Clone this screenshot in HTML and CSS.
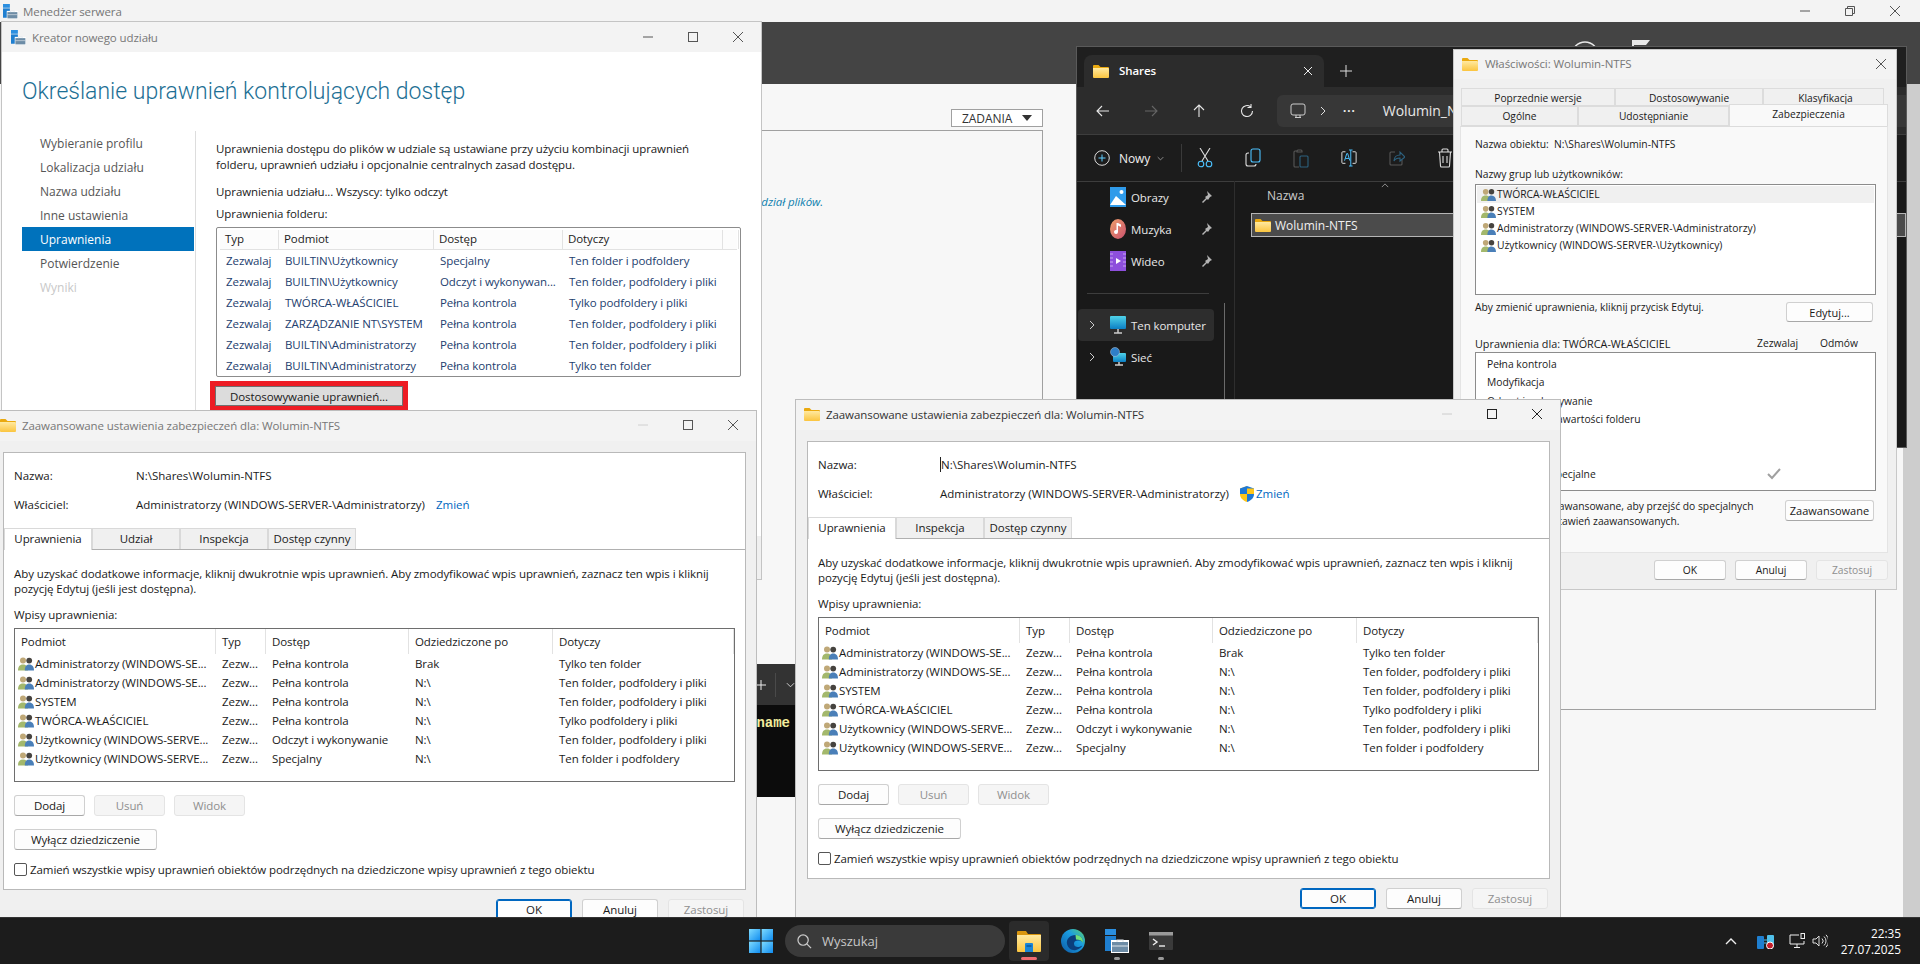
FILE: index.html
```html
<!DOCTYPE html>
<html lang="pl">
<head>
  <meta charset="UTF-8">
  <meta name="viewport" content="width=device-width, initial-scale=1.0">
  <title>Menedżer serwera</title>
  <link rel="stylesheet" href="styles.css">
</head>
<body>

<svg class="defs" width="0" height="0">
  <defs>
    <linearGradient id="folder-body" x1="0" y1="0" x2="0" y2="1">
      <stop offset="0" stop-color="#ffe9a0"/>
      <stop offset="1" stop-color="#fbc53f"/>
    </linearGradient>
    <linearGradient id="win-logo" x1="0" y1="0" x2="1" y2="1">
      <stop offset="0" stop-color="#7fdcff"/>
      <stop offset="1" stop-color="#0f8cf0"/>
    </linearGradient>
    <linearGradient id="edge-grad" x1="0" y1="1" x2="1" y2="0">
      <stop offset="0" stop-color="#0c59a4"/>
      <stop offset="0.6" stop-color="#1b9de2"/>
      <stop offset="1" stop-color="#5ed36a"/>
    </linearGradient>
    <linearGradient id="pc-screen" x1="0" y1="0" x2="0" y2="1">
      <stop offset="0" stop-color="#4fd2e8"/>
      <stop offset="1" stop-color="#0b7fc4"/>
    </linearGradient>
    <linearGradient id="music-grad" x1="0" y1="0" x2="1" y2="1">
      <stop offset="0" stop-color="#f0a06a"/>
      <stop offset="1" stop-color="#c9506e"/>
    </linearGradient>
    <symbol id="i-folder" viewBox="0 0 16 14">
      <path d="M0 2a1 1 0 0 1 1-1h4.500l2 2H15a1 1 0 0 1 1 1v1H0z" fill="#eaa90f"/>
      <path d="M0 4h15a1 1 0 0 1 1 1v8a1 1 0 0 1-1 1H1a1 1 0 0 1-1-1z" fill="url(#folder-body)"/>
    </symbol>
    <symbol id="i-group" viewBox="0 0 16 14">
      <circle cx="5" cy="3.600" r="3" fill="#bfa877"/>
      <path d="M0 13.500c0-3.800 1.500-6 5-6s5 2.200 5 6z" fill="#a3b86c"/>
      <circle cx="11.200" cy="3.600" r="2.900" fill="#46433f"/>
      <path d="M6.800 13.500c0-3.800 1.300-6 4.400-6s4.800 2.200 4.800 6z" fill="#4a7fb8"/>
    </symbol>
    <symbol id="i-server" viewBox="0 0 24 24">
      <rect x="0" y="0" width="11" height="6" fill="#2b8fe0"/>
      <rect x="0" y="7" width="11" height="15" fill="#1f7fd0"/>
      <rect x="6" y="11" width="18" height="13" fill="#fff"/>
      <rect x="7" y="13" width="16" height="10" fill="#6d8ca6"/>
      <path d="M12 13v-2h6v2" fill="none" stroke="#dfe6ec" stroke-width="1.200"/>
      <path d="M7 17h16" stroke="#dfe6ec"/>
    </symbol>
    <symbol id="i-group-tray" viewBox="0 0 18 16">
      <rect x="0" y="3" width="7" height="13" rx="1" fill="#1f7fd0"/>
      <rect x="10" y="2" width="7" height="12" rx="1" fill="#4fc0ea"/>
      <path d="M7 7h3M7 10h3" stroke="#4fc0ea"/>
    </symbol>
  </defs>
</svg>

<div class="desktop">

  <!-- window at the back -->
  <div class="server-manager">
    <div class="sm-title">
      <svg class="ico-16"><use href="#i-server"/></svg>
      <span>Menedżer serwera</span>
      <div class="sm-controls">
        <svg class="ctl" viewBox="0 0 10 10"><path d="M0 5h10"/></svg>
        <svg class="ctl" viewBox="0 0 10 10"><path d="M0.500 2.500h7v7h-7zM2.500 2.500v-2h7v7h-2"/></svg>
        <svg class="ctl" viewBox="0 0 10 10"><path d="M0 0l10 10M10 0L0 10"/></svg>
      </div>
    </div>
    <div class="sm-bar">
      <svg width="80" height="30" viewBox="0 0 80 30">
        <circle cx="13" cy="15" r="13" fill="none" stroke="#e8e8e8" stroke-width="1.500"/>
        <rect x="36" y="10" width="2" height="6" fill="#e8e8e8"/>
        <path d="M60 0h2v20h-2zM62 0h16l-4 5h-12z" fill="#e8e8e8"/>
      </svg>
    </div>
    <div class="sm-body">
      <div class="sm-main">
        <div class="sm-col">
          <div class="sm-tasks">ZADANIA <span class="caret"></span></div>
          <div class="sm-panel">
            <p class="sm-hint">Aby utworzyć udział, uruchom Kreatora nowego udział plików.</p>
          </div>
        </div>
        <div class="sm-col sm-col-right">
          <div class="sm-panel"></div>
        </div>
      </div>
      <div class="sm-scroll"></div>
    </div>
  </div>

  <!-- terminal, only its right edge shows between the dialogs -->
  <div class="terminal">
    <div class="term-bar">
      <svg class="term-plus" viewBox="0 0 10 10"><path d="M5 0v10M0 5h10"/></svg>
      <span class="term-sep"></span>
      <svg class="term-chev" viewBox="0 0 10 6"><path d="M1 1l4 4 4-4"/></svg>
    </div>
    <div class="term-body">name</div>
  </div>

  <!-- file explorer -->
  <div class="explorer">
    <div class="ex-tabs">
      <div class="ex-tab">
        <svg class="ico-folder"><use href="#i-folder"/></svg>
        <span class="ex-tab-name">Shares</span>
        <svg class="ex-x" viewBox="0 0 10 10"><path d="M1 1l8 8M9 1l-8 8"/></svg>
      </div>
      <svg class="ex-plus" viewBox="0 0 12 12"><path d="M6 0v12M0 6h12"/></svg>
    </div>
    <div class="ex-nav">
      <svg class="ex-navbtn" viewBox="0 0 16 16"><path d="M14 8H2M7 3L2 8l5 5"/></svg>
      <svg class="ex-navbtn off" viewBox="0 0 16 16"><path d="M2 8h12M9 3l5 5-5 5"/></svg>
      <svg class="ex-navbtn" viewBox="0 0 16 16"><path d="M8 14V2M3 7l5-5 5 5"/></svg>
      <svg class="ex-navbtn" viewBox="0 0 16 16"><path d="M13.500 8a5.500 5.500 0 1 1-2-4.200M12 1v3.500H8.500"/></svg>
      <div class="ex-addr">
        <svg class="ex-pc" viewBox="0 0 16 16"><rect x="1" y="1" width="14" height="11" rx="2"/><path d="M5 14.500h6M6 12v2.500M10 12v2.500"/></svg>
        <svg class="ex-chev" viewBox="0 0 6 10"><path d="M1 1l4 4-4 4"/></svg>
        <span class="ex-dots">&middot;&middot;&middot;</span>
        <span class="ex-path">Wolumin_NTFS</span>
      </div>
    </div>
    <div class="ex-cmd">
      <svg class="ex-new" viewBox="0 0 16 16"><circle cx="8" cy="8" r="7.300" fill="none" stroke="#ddd"/><path d="M8 4.500v7M4.500 8h7" stroke="#60cdff" fill="none"/></svg>
      <span class="ex-new-label">Nowy</span>
      <svg class="ex-new-chev" viewBox="0 0 10 6"><path d="M1 1l4 4 4-4"/></svg>
      <span class="ex-cmd-sep"></span>
      <svg class="ex-tool" viewBox="0 0 16 20"><path d="M3 0l8 13M13 0L5 13" stroke="#ddd"/><circle cx="4" cy="16" r="2.800" stroke="#4cc2ff"/><circle cx="12" cy="16" r="2.800" stroke="#4cc2ff"/></svg>
      <svg class="ex-tool" viewBox="0 0 16 20"><path d="M4 5H3a2 2 0 0 0-2 2v9a2 2 0 0 0 2 2h6a2 2 0 0 0 2-2" stroke="#ddd"/><rect x="6" y="1" width="9" height="13" rx="2" stroke="#4cc2ff"/></svg>
      <svg class="ex-tool dim" viewBox="0 0 16 20"><path d="M4 3H2a1 1 0 0 0-1 1v14a1 1 0 0 0 1 1h4M4 3a1 1 0 0 1 1-1h3a1 1 0 0 1 1 1v1H4z" stroke="#888"/><rect x="7" y="8" width="8" height="11" rx="1" stroke="#3a9ad0"/></svg>
      <svg class="ex-tool" viewBox="0 0 18 20"><path d="M5 3H2a1 1 0 0 0-1 1v11a1 1 0 0 0 1 1h3M13 3h3a1 1 0 0 1 1 1v11a1 1 0 0 1-1 1h-3" stroke="#ddd"/><path d="M11 1v18M9 1h4M9 19h4" stroke="#4cc2ff"/><path d="M4 13l2.500-8h1L10 13M5 10.500h4" stroke="#4cc2ff"/></svg>
      <svg class="ex-tool dim" viewBox="0 0 16 20"><path d="M6 4H2a1 1 0 0 0-1 1v11a1 1 0 0 0 1 1h10a1 1 0 0 0 1-1v-4" stroke="#888"/><path d="M5 13c0-4 3-6 6-6V4l5 5-5 4v-3c-3 0-5 1-6 3z" stroke="#3a9ad0"/></svg>
      <svg class="ex-tool" viewBox="0 0 16 20"><path d="M1 4h14M5 4V2a1 1 0 0 1 1-1h4a1 1 0 0 1 1 1v2M2.500 4l1 14a1 1 0 0 0 1 1h7a1 1 0 0 0 1-1l1-14M6 8v7M10 8v7" stroke="#ddd"/></svg>
    </div>
    <div class="ex-main">
      <div class="ex-side">
        <div class="ex-navrow">
          <svg class="ex-ico" viewBox="0 0 16 20"><rect width="16" height="20" fill="#2f9bea"/><circle cx="11.500" cy="5" r="2" fill="#fff"/><path d="M0 18l6-9 10 9z" fill="#fff"/></svg>
          <span class="ex-navlabel">Obrazy</span>
          <svg class="ex-pin" viewBox="0 0 12 12"><path d="M7 0l5 5-2 1-2 3-1-1-4 4-1-1 4-4-1-1 3-2z"/></svg>
        </div>
        <div class="ex-navrow">
          <svg class="ex-ico" viewBox="0 0 16 20"><ellipse cx="8" cy="10" rx="8" ry="10" fill="url(#music-grad)"/><path d="M8 4v9a2 2 0 1 1-1.500-2V4zM8 4l3 1.500V8L8 6.500z" fill="#fff"/></svg>
          <span class="ex-navlabel">Muzyka</span>
          <svg class="ex-pin" viewBox="0 0 12 12"><path d="M7 0l5 5-2 1-2 3-1-1-4 4-1-1 4-4-1-1 3-2z"/></svg>
        </div>
        <div class="ex-navrow">
          <svg class="ex-ico" viewBox="0 0 16 20"><rect width="16" height="20" fill="#8d4fdc"/><path d="M0 3h16M0 7h16M0 11h16M0 15h16" stroke="#c9a6f2" stroke-dasharray="3 10"/><path d="M6 7l5 3-5 3z" fill="#fff"/></svg>
          <span class="ex-navlabel">Wideo</span>
          <svg class="ex-pin" viewBox="0 0 12 12"><path d="M7 0l5 5-2 1-2 3-1-1-4 4-1-1 4-4-1-1 3-2z"/></svg>
        </div>
        <div class="ex-hr"></div>
        <div class="ex-navrow is-hover">
          <svg class="ex-expand" viewBox="0 0 6 10"><path d="M1 1l4 4-4 4"/></svg>
          <svg class="ex-ico" viewBox="0 0 16 20"><rect y="1" width="16" height="13" rx="1" fill="url(#pc-screen)"/><path d="M8 14v4M4 18h8" stroke="#ccc" stroke-width="1.500"/></svg>
          <span class="ex-navlabel">Ten komputer</span>
        </div>
        <div class="ex-navrow">
          <svg class="ex-expand" viewBox="0 0 6 10"><path d="M1 1l4 4-4 4"/></svg>
          <svg class="ex-ico" viewBox="0 0 16 20"><rect x="3" y="6" width="13" height="9" rx="1" fill="url(#pc-screen)"/><path d="M9 15v3M5 18h8" stroke="#ccc" stroke-width="1.500"/><circle cx="5" cy="5" r="4.500" fill="#2f7fc8" stroke="#bcd" stroke-width="0.500"/></svg>
          <span class="ex-navlabel">Sieć</span>
        </div>
        <div class="ex-scrollthumb"></div>
      </div>
      <div class="ex-files">
        <div class="ex-head">Nazwa<svg class="ex-sort" viewBox="0 0 10 6"><path d="M1 5l4-4 4 4"/></svg></div>
        <div class="ex-file">
          <svg class="ico-folder"><use href="#i-folder"/></svg>
          <span>Wolumin-NTFS</span>
        </div>
      </div>
    </div>
  </div>

  <!-- new share wizard -->
  <div class="wizard">
    <div class="titlebar wiz-title">
      <svg class="ico-16"><use href="#i-server"/></svg>
      <span class="titlebar-name">Kreator nowego udziału</span>
      <div class="controls">
        <svg class="ctl" viewBox="0 0 10 10"><path d="M0 5h10"/></svg>
        <svg class="ctl" viewBox="0 0 10 10"><rect x="0.500" y="0.500" width="9" height="9"/></svg>
        <svg class="ctl" viewBox="0 0 10 10"><path d="M0 0l10 10M10 0L0 10"/></svg>
      </div>
    </div>
    <h1 class="wiz-heading">Określanie uprawnień kontrolujących dostęp</h1>
    <div class="wiz-body">
      <ul class="wiz-steps">
        <li>Wybieranie profilu</li>
        <li>Lokalizacja udziału</li>
        <li>Nazwa udziału</li>
        <li>Inne ustawienia</li>
        <li class="current">Uprawnienia</li>
        <li>Potwierdzenie</li>
        <li class="off">Wyniki</li>
      </ul>
      <div class="wiz-content">
        <p class="wiz-intro">Uprawnienia dostępu do plików w udziale są ustawiane przy użyciu kombinacji uprawnień folderu, uprawnień udziału i opcjonalnie centralnych zasad dostępu.</p>
        <p class="wiz-line1">Uprawnienia udziału... Wszyscy: tylko odczyt</p>
        <p class="wiz-line2">Uprawnienia folderu:</p>
        <div class="wiz-table">
          <div class="wiz-row wiz-head"><span>Typ</span><span>Podmiot</span><span>Dostęp</span><span>Dotyczy</span><span></span></div>
          <div class="wiz-row"><span>Zezwalaj</span><span>BUILTIN\Użytkownicy</span><span>Specjalny</span><span>Ten folder i podfoldery</span></div>
          <div class="wiz-row"><span>Zezwalaj</span><span>BUILTIN\Użytkownicy</span><span>Odczyt i wykonywan...</span><span>Ten folder, podfoldery i pliki</span></div>
          <div class="wiz-row"><span>Zezwalaj</span><span>TWÓRCA-WŁAŚCICIEL</span><span>Pełna kontrola</span><span>Tylko podfoldery i pliki</span></div>
          <div class="wiz-row"><span>Zezwalaj</span><span>ZARZĄDZANIE NT\SYSTEM</span><span>Pełna kontrola</span><span>Ten folder, podfoldery i pliki</span></div>
          <div class="wiz-row"><span>Zezwalaj</span><span>BUILTIN\Administratorzy</span><span>Pełna kontrola</span><span>Ten folder, podfoldery i pliki</span></div>
          <div class="wiz-row"><span>Zezwalaj</span><span>BUILTIN\Administratorzy</span><span>Pełna kontrola</span><span>Tylko ten folder</span></div>
        </div>
        <div class="wiz-marked"><button class="wiz-custom">Dostosowywanie uprawnień...</button></div>
      </div>
    </div>
    <div class="wiz-footer"></div>
  </div>

  <!-- folder properties -->
  <div class="props">
    <div class="titlebar props-title">
      <svg class="ico-folder"><use href="#i-folder"/></svg>
      <span class="titlebar-name">Właściwości: Wolumin-NTFS</span>
      <svg class="ctl props-close" viewBox="0 0 10 10"><path d="M0 0l10 10M10 0L0 10"/></svg>
    </div>
    <div class="props-tabs">
      <div class="props-tabrow">
        <span class="ptab w154">Poprzednie wersje</span>
        <span class="ptab w148">Dostosowywanie</span>
        <span class="ptab w121">Klasyfikacja</span>
      </div>
      <div class="props-tabrow">
        <span class="ptab w117">Ogólne</span>
        <span class="ptab w151">Udostępnianie</span>
        <span class="ptab ptab-on">Zabezpieczenia</span>
      </div>
    </div>
    <div class="props-panel">
      <p class="props-name">Nazwa obiektu:&nbsp; N:\Shares\Wolumin-NTFS</p>
      <p class="props-label">Nazwy grup lub użytkowników:</p>
      <div class="props-users">
        <div class="user-row is-on"><svg class="ico-group"><use href="#i-group"/></svg>TWÓRCA-WŁAŚCICIEL</div>
        <div class="user-row"><svg class="ico-group"><use href="#i-group"/></svg>SYSTEM</div>
        <div class="user-row"><svg class="ico-group"><use href="#i-group"/></svg>Administratorzy (WINDOWS-SERVER-\Administratorzy)</div>
        <div class="user-row"><svg class="ico-group"><use href="#i-group"/></svg>Użytkownicy (WINDOWS-SERVER-\Użytkownicy)</div>
      </div>
      <div class="props-edit">
        <span>Aby zmienić uprawnienia, kliknij przycisk Edytuj.</span>
        <button class="btn btn-edit">Edytuj...</button>
      </div>
      <div class="perm-head">
        <span>Uprawnienia dla: TWÓRCA-WŁAŚCICIEL</span>
        <span>Zezwalaj</span>
        <span>Odmów</span>
      </div>
      <div class="perm-box">
        <div class="perm-row">Pełna kontrola</div>
        <div class="perm-row">Modyfikacja</div>
        <div class="perm-row">Odczyt i wykonywanie</div>
        <div class="perm-row">Wyświetlanie zawartości folderu</div>
        <div class="perm-row">Odczyt</div>
        <div class="perm-row">Zapis</div>
        <div class="perm-row">Uprawnienia specjalne<svg class="perm-check" viewBox="0 0 14 12"><path d="M1 6l4 4 8-9"/></svg></div>
      </div>
      <div class="props-adv">
        <p>Kliknij przycisk Zaawansowane, aby przejść do specjalnych<br>uprawnień lub ustawień zaawansowanych.</p>
        <button class="btn btn-adv">Zaawansowane</button>
      </div>
    </div>
    <div class="props-footer">
      <button class="btn btn-foot">OK</button>
      <button class="btn btn-foot">Anuluj</button>
      <button class="btn btn-foot btn-off">Zastosuj</button>
    </div>
  </div>

  <!-- advanced security, left -->
  <div class="adv adv-left">
    <div class="titlebar adv-title">
      <svg class="ico-folder"><use href="#i-folder"/></svg>
      <span class="titlebar-name">Zaawansowane ustawienia zabezpieczeń dla: Wolumin-NTFS</span>
      <div class="controls">
        <svg class="ctl ctl-off" viewBox="0 0 10 10"><path d="M0 5h10"/></svg>
        <svg class="ctl" viewBox="0 0 10 10"><rect x="0.500" y="0.500" width="9" height="9"/></svg>
        <svg class="ctl" viewBox="0 0 10 10"><path d="M0 0l10 10M10 0L0 10"/></svg>
      </div>
    </div>
    <div class="adv-panel">
      <div class="adv-meta">
        <span>Nazwa:</span><span>N:\Shares\Wolumin-NTFS</span>
        <span>Właściciel:</span><span>Administratorzy (WINDOWS-SERVER-\Administratorzy) <a class="link">Zmień</a></span>
      </div>
      <div class="adv-tabs">
        <span class="atab atab-on">Uprawnienia</span>
        <span class="atab">Udział</span>
        <span class="atab">Inspekcja</span>
        <span class="atab">Dostęp czynny</span>
      </div>
      <p class="adv-info">Aby uzyskać dodatkowe informacje, kliknij dwukrotnie wpis uprawnień. Aby zmodyfikować wpis uprawnień, zaznacz ten wpis i kliknij pozycję Edytuj (jeśli jest dostępna).</p>
      <p class="adv-label">Wpisy uprawnienia:</p>
      <div class="adv-list">
        <div class="adv-row adv-head"><span>Podmiot</span><span>Typ</span><span>Dostęp</span><span>Odziedziczone po</span><span>Dotyczy</span></div>
        <div class="adv-row"><span><svg class="ico-group"><use href="#i-group"/></svg>Administratorzy (WINDOWS-SE...</span><span>Zezw...</span><span>Pełna kontrola</span><span>Brak</span><span>Tylko ten folder</span></div>
        <div class="adv-row"><span><svg class="ico-group"><use href="#i-group"/></svg>Administratorzy (WINDOWS-SE...</span><span>Zezw...</span><span>Pełna kontrola</span><span>N:\</span><span>Ten folder, podfoldery i pliki</span></div>
        <div class="adv-row"><span><svg class="ico-group"><use href="#i-group"/></svg>SYSTEM</span><span>Zezw...</span><span>Pełna kontrola</span><span>N:\</span><span>Ten folder, podfoldery i pliki</span></div>
        <div class="adv-row"><span><svg class="ico-group"><use href="#i-group"/></svg>TWÓRCA-WŁAŚCICIEL</span><span>Zezw...</span><span>Pełna kontrola</span><span>N:\</span><span>Tylko podfoldery i pliki</span></div>
        <div class="adv-row"><span><svg class="ico-group"><use href="#i-group"/></svg>Użytkownicy (WINDOWS-SERVE...</span><span>Zezw...</span><span>Odczyt i wykonywanie</span><span>N:\</span><span>Ten folder, podfoldery i pliki</span></div>
        <div class="adv-row"><span><svg class="ico-group"><use href="#i-group"/></svg>Użytkownicy (WINDOWS-SERVE...</span><span>Zezw...</span><span>Specjalny</span><span>N:\</span><span>Ten folder i podfoldery</span></div>
      </div>
      <div class="adv-btns">
        <button class="btn btn-act">Dodaj</button>
        <button class="btn btn-act btn-off">Usuń</button>
        <button class="btn btn-act btn-off">Widok</button>
      </div>
      <button class="btn btn-inherit">Wyłącz dziedziczenie</button>
      <div class="adv-replace"><span class="checkbox"></span>Zamień wszystkie wpisy uprawnień obiektów podrzędnych na dziedziczone wpisy uprawnień z tego obiektu</div>
    </div>
    <div class="adv-footer">
      <button class="btn btn-foot2 btn-default">OK</button>
      <button class="btn btn-foot2">Anuluj</button>
      <button class="btn btn-foot2 btn-off">Zastosuj</button>
    </div>
  </div>

  <!-- advanced security, right (active) -->
  <div class="adv adv-right">
    <div class="titlebar adv-title">
      <svg class="ico-folder"><use href="#i-folder"/></svg>
      <span class="titlebar-name">Zaawansowane ustawienia zabezpieczeń dla: Wolumin-NTFS</span>
      <div class="controls">
        <svg class="ctl ctl-off" viewBox="0 0 10 10"><path d="M0 5h10"/></svg>
        <svg class="ctl" viewBox="0 0 10 10"><rect x="0.500" y="0.500" width="9" height="9"/></svg>
        <svg class="ctl" viewBox="0 0 10 10"><path d="M0 0l10 10M10 0L0 10"/></svg>
      </div>
    </div>
    <div class="adv-panel">
      <div class="adv-meta">
        <span>Nazwa:</span><span><span class="text-caret">N:\Shares\Wolumin-NTFS</span></span>
        <span>Właściciel:</span>
        <span class="adv-owner">Administratorzy (WINDOWS-SERVER-\Administratorzy)
          <svg class="shield" viewBox="0 0 14 16"><path d="M7 0l7 2.500V8c0 4-3 6.500-7 8z" fill="#1e78d6"/><path d="M7 0L0 2.500V8h7zM7 8v8c-4-1.500-7-4-7-8z" fill="#ffc61a"/><path d="M14 8H7V2.500L14 2.500z" fill="#ffc61a"/><path d="M7 0v8H0V2.500z" fill="#1e78d6"/></svg>
          <a class="link">Zmień</a></span>
      </div>
      <div class="adv-tabs">
        <span class="atab atab-on">Uprawnienia</span>
        <span class="atab">Inspekcja</span>
        <span class="atab">Dostęp czynny</span>
      </div>
      <p class="adv-info">Aby uzyskać dodatkowe informacje, kliknij dwukrotnie wpis uprawnień. Aby zmodyfikować wpis uprawnień, zaznacz ten wpis i kliknij pozycję Edytuj (jeśli jest dostępna).</p>
      <p class="adv-label">Wpisy uprawnienia:</p>
      <div class="adv-list">
        <div class="adv-row adv-head"><span>Podmiot</span><span>Typ</span><span>Dostęp</span><span>Odziedziczone po</span><span>Dotyczy</span></div>
        <div class="adv-row"><span><svg class="ico-group"><use href="#i-group"/></svg>Administratorzy (WINDOWS-SE...</span><span>Zezw...</span><span>Pełna kontrola</span><span>Brak</span><span>Tylko ten folder</span></div>
        <div class="adv-row"><span><svg class="ico-group"><use href="#i-group"/></svg>Administratorzy (WINDOWS-SE...</span><span>Zezw...</span><span>Pełna kontrola</span><span>N:\</span><span>Ten folder, podfoldery i pliki</span></div>
        <div class="adv-row"><span><svg class="ico-group"><use href="#i-group"/></svg>SYSTEM</span><span>Zezw...</span><span>Pełna kontrola</span><span>N:\</span><span>Ten folder, podfoldery i pliki</span></div>
        <div class="adv-row"><span><svg class="ico-group"><use href="#i-group"/></svg>TWÓRCA-WŁAŚCICIEL</span><span>Zezw...</span><span>Pełna kontrola</span><span>N:\</span><span>Tylko podfoldery i pliki</span></div>
        <div class="adv-row"><span><svg class="ico-group"><use href="#i-group"/></svg>Użytkownicy (WINDOWS-SERVE...</span><span>Zezw...</span><span>Odczyt i wykonywanie</span><span>N:\</span><span>Ten folder, podfoldery i pliki</span></div>
        <div class="adv-row"><span><svg class="ico-group"><use href="#i-group"/></svg>Użytkownicy (WINDOWS-SERVE...</span><span>Zezw...</span><span>Specjalny</span><span>N:\</span><span>Ten folder i podfoldery</span></div>
      </div>
      <div class="adv-btns">
        <button class="btn btn-act">Dodaj</button>
        <button class="btn btn-act btn-off">Usuń</button>
        <button class="btn btn-act btn-off">Widok</button>
      </div>
      <button class="btn btn-inherit">Wyłącz dziedziczenie</button>
      <div class="adv-replace"><span class="checkbox"></span>Zamień wszystkie wpisy uprawnień obiektów podrzędnych na dziedziczone wpisy uprawnień z tego obiektu</div>
    </div>
    <div class="adv-footer">
      <button class="btn btn-foot2 btn-default">OK</button>
      <button class="btn btn-foot2">Anuluj</button>
      <button class="btn btn-foot2 btn-off">Zastosuj</button>
    </div>
  </div>

  <!-- taskbar -->
  <div class="taskbar">
    <svg class="tb-start" viewBox="0 0 24 24">
      <rect width="11.400" height="11.400" fill="url(#win-logo)"/>
      <rect x="12.600" width="11.400" height="11.400" fill="url(#win-logo)"/>
      <rect y="12.600" width="11.400" height="11.400" fill="url(#win-logo)"/>
      <rect x="12.600" y="12.600" width="11.400" height="11.400" fill="url(#win-logo)"/>
    </svg>
    <div class="tb-search">
      <svg class="tb-lens" viewBox="0 0 16 16"><circle cx="6.500" cy="6.500" r="5.500"/><path d="M10.500 10.500L15 15"/></svg>
      <span>Wyszukaj</span>
    </div>
    <div class="tb-app is-active">
      <svg class="tb-icon" viewBox="0 0 24 22">
        <path d="M0 2a1 1 0 0 1 1-1h8l2 3h12a1 1 0 0 1 1 1v1H0z" fill="#d9960f"/>
        <path d="M0 5h24v16a1 1 0 0 1-1 1H1a1 1 0 0 1-1-1z" fill="url(#folder-body)"/>
        <path d="M8 14a1 1 0 0 1 1-1h6a1 1 0 0 1 1 1v8H8z" fill="#1a86d8"/>
        <rect x="9.500" y="15" width="5" height="2" fill="#0f62a8"/>
      </svg>
      <span class="tb-ind"></span>
    </div>
    <div class="tb-app">
      <svg class="tb-icon" viewBox="0 0 24 24">
        <circle cx="12" cy="12" r="12" fill="url(#edge-grad)"/>
        <path d="M22 13c0-5-4-7-7.500-7C9 6 5 10 6 15c.8 4 5 7 9 6 3-.8 5-2.500 6.500-4.500-3 2-8 2.500-8.500-1.500 0-3 2-3.500 4.500-3.500 2 0 3.500.7 4.500 1.500z" fill="#0b3e7c"/>
        <path d="M15 10.500c3 0 6 1 7 3 .5-4-3-8-7.500-7.500z" fill="#6fe07a"/>
      </svg>
    </div>
    <div class="tb-app">
      <svg class="tb-icon"><use href="#i-server"/></svg>
      <span class="tb-dot"></span>
    </div>
    <div class="tb-app">
      <svg class="tb-icon" viewBox="0 0 24 18">
        <rect width="24" height="18" rx="1" fill="#3a3a3a"/>
        <rect width="24" height="3.500" fill="#9a9a9a"/>
        <path d="M4 7l4 3-4 3" fill="none" stroke="#eee" stroke-width="1.400"/>
        <path d="M10 14h6" stroke="#eee" stroke-width="1.400"/>
      </svg>
      <span class="tb-dot"></span>
    </div>
    <div class="tb-tray">
      <svg class="tray-chev" viewBox="0 0 12 7"><path d="M1 6l5-5 5 5"/></svg>
      <svg class="tray-app" viewBox="0 0 18 16">
        <use href="#i-group-tray"/>
        <circle cx="13" cy="12.500" r="3.500" fill="#c41e2a" stroke="#fff" stroke-width="1"/>
      </svg>
      <svg class="tray-net" viewBox="0 0 16 16"><path d="M10 2H1v9h14V8M8 11v3M5 14.500h6"/><rect x="12" y="0.500" width="3.500" height="5"/></svg>
      <svg class="tray-vol" viewBox="0 0 16 14"><path d="M1 5h3l3-3v10l-3-3H1zM10 4.500a3.500 3.500 0 0 1 0 5M12 2.500a6 6 0 0 1 0 9M14 .8a8.500 8.500 0 0 1 0 12.400"/></svg>
      <div class="tray-clock"><span>22:35</span><span>27.07.2025</span></div>
    </div>
  </div>

</div>

</body>
</html>
```

FILE: styles.css
```css
* {
  box-sizing: border-box;
}

body {
  margin: 0;
  font-family: "Open Sans", "Noto Sans", sans-serif;
  font-size: 11.5px;
  letter-spacing: -0.08px;
  line-height: 15px;
  color: #1a1a1a;
  background: #1c1c1c;
}

p, h1, ul {
  margin: 0;
  padding: 0;
}

svg {
  display: block;
  flex: none;
}

.defs {
  position: absolute;
}

.desktop {
  position: relative;
  width: 1920px;
  height: 964px;
  overflow: hidden;
  display: flex;
  flex-direction: column;
}

.ico-16 {
  width: 15px;
  height: 15px;
}

.ico-folder {
  width: 16px;
  height: 14px;
}

.ico-group {
  width: 16px;
  height: 14px;
}

/* server manager */
.server-manager {
  flex: 1;
  display: flex;
  flex-direction: column;
  background: #f7f7f7;
}

.sm-title {
  height: 22px;
  display: flex;
  align-items: center;
  gap: 5px;
  padding-left: 3px;
  background: #f3f3f3;
  color: #767676;
}

.sm-controls {
  margin-left: auto;
  display: flex;
  gap: 35px;
  padding-right: 20px;
}

.ctl {
  width: 10px;
  height: 10px;
  fill: none;
  stroke: #555;
  stroke-width: 1;
}

.ctl-off {
  stroke: #d0d0d0;
}

.sm-bar {
  height: 62px;
  background: #444;
  display: flex;
  justify-content: flex-end;
  padding: 18px 268px 0 0;
  overflow: hidden;
}

.sm-body {
  flex: 1;
  display: flex;
}

.sm-main {
  flex: 1;
  display: grid;
  grid-template-columns: 743px 800px;
  column-gap: 33px;
  padding: 25px 27px 207px 300px;
}

.sm-col {
  display: flex;
  flex-direction: column;
}

.sm-col-right {
  padding-top: 21px;
}

.sm-tasks {
  align-self: flex-end;
  width: 92px;
  height: 18px;
  margin-bottom: 3px;
  display: flex;
  align-items: center;
  justify-content: space-between;
  padding: 0 10px;
  font-size: 12px;
  background: #fff;
  border: 1px solid #a0a0a0;
  color: #333;
}

.caret {
  border-left: 5px solid transparent;
  border-right: 5px solid transparent;
  border-top: 6px solid #333;
}

.sm-panel {
  flex: 1;
  background: #f7f7f7;
  border: 1px solid #a0a0a0;
}

.sm-hint {
  margin-top: 63px;
  padding-right: 219px;
  text-align: right;
  font-style: italic;
  color: #0f7fae;
}

.sm-scroll {
  width: 17px;
  background: #cdcdcd;
}

/* terminal */
.terminal {
  position: absolute;
  left: 500px;
  top: 664px;
  width: 296px;
  height: 133px;
  background: #0c0c0c;
}

.term-bar {
  height: 41px;
  background: #333;
  display: flex;
  align-items: center;
  justify-content: flex-end;
}

.term-plus {
  width: 10px;
  height: 10px;
  fill: none;
  stroke: #eee;
  margin-right: 9px;
}

.term-sep {
  width: 1px;
  height: 24px;
  background: #4a4a4a;
  margin-right: 10px;
}

.term-chev {
  width: 9px;
  height: 6px;
  fill: none;
  stroke: #ddd;
  margin-right: 1px;
}

.term-body {
  padding: 11px 6px 0 0;
  text-align: right;
  font-family: "Liberation Mono", monospace;
  font-size: 14px;
  letter-spacing: 0;
  font-weight: bold;
  color: #f2ec9e;
}

/* explorer */
.explorer {
  position: absolute;
  left: 1076px;
  top: 46px;
  width: 831px;
  height: 402px;
  background: #191919;
  border: 1px solid #5a5a5a;
  color: #f0f0f0;
  display: flex;
  flex-direction: column;
}

.ex-tabs {
  height: 40px;
  display: flex;
  align-items: flex-end;
  background: #1f1f1f;
  padding-left: 7px;
}

.ex-tab {
  width: 240px;
  height: 32px;
  display: flex;
  align-items: center;
  padding: 0 11px 1px 9px;
  background: #2c2c2c;
  border-radius: 8px 8px 0 0;
}

.ex-tab-name {
  margin-left: 10px;
  font-weight: 600;
  color: #fff;
}

.ex-x {
  margin-left: auto;
  width: 10px;
  height: 10px;
  fill: none;
  stroke: #eee;
}

.ex-plus {
  width: 12px;
  height: 12px;
  margin: 0 0 10px 16px;
  fill: none;
  stroke: #ddd;
}

.ex-nav {
  height: 48px;
  display: flex;
  align-items: center;
  background: #2c2c2c;
  border-bottom: 1px solid #3d3d3d;
  padding-left: 18px;
}

.ex-navbtn {
  width: 16px;
  height: 16px;
  margin-right: 32px;
  fill: none;
  stroke: #e8e8e8;
  stroke-width: 1.100;
}

.ex-navbtn.off {
  stroke: #666;
}

.ex-addr {
  margin-left: -10px;
  flex: 1;
  height: 32px;
  display: flex;
  align-items: center;
  padding-left: 13px;
  background: #373737;
  border-radius: 6px 0 0 6px;
}

.ex-pc {
  width: 16px;
  height: 16px;
  fill: none;
  stroke: #ccc;
}

.ex-chev {
  width: 6px;
  height: 10px;
  margin-left: 14px;
  fill: none;
  stroke: #ddd;
}

.ex-dots {
  margin-left: 17px;
  font-weight: bold;
  letter-spacing: 1px;
}

.ex-path {
  margin-left: 27px;
  font-size: 14px;
  color: #e8e8e8;
}

.ex-cmd {
  height: 47px;
  display: flex;
  align-items: center;
  background: #1c1c1c;
  border-bottom: 1px solid #3d3d3d;
  padding-left: 17px;
}

.ex-new {
  width: 16px;
  height: 16px;
}

.ex-new-label {
  margin-left: 9px;
  font-size: 12px;
}

.ex-new-chev {
  width: 7px;
  height: 5px;
  margin-left: 7px;
  fill: none;
  stroke: #bbb;
}

.ex-cmd-sep {
  width: 1px;
  height: 28px;
  margin: 0 15px 0 17px;
  background: #3a3a3a;
}

.ex-tool {
  width: 16px;
  height: 20px;
  margin-right: 32px;
  fill: none;
  stroke-width: 1.100;
}

.ex-tool.dim {
  opacity: 0.55;
}

.ex-main {
  flex: 1;
  display: flex;
  min-height: 0;
}

.ex-side {
  position: relative;
  width: 158px;
  margin-top: -1px;
  border-right: 1px solid #2e2e2e;
}

.ex-navrow {
  width: 136px;
  height: 32px;
  margin-left: 1px;
  display: flex;
  align-items: center;
  padding-left: 32px;
  border-radius: 4px;
}

.ex-navrow.is-hover {
  background: #2d2d2d;
}

.ex-expand {
  width: 6px;
  height: 10px;
  margin-left: -21px;
  margin-right: 15px;
  fill: none;
  stroke: #ccc;
}

.ex-ico {
  width: 16px;
  height: 20px;
}

.ex-navlabel {
  margin-left: 5px;
  color: #e8e8e8;
}

.ex-pin {
  margin-left: auto;
  margin-right: 2px;
  width: 12px;
  height: 12px;
  fill: #b5b5b5;
}

.ex-hr {
  width: 122px;
  height: 1px;
  margin: 16px 0 15px 10px;
  background: #3d3d3d;
}

.ex-scrollthumb {
  position: absolute;
  right: 9px;
  top: 122px;
  bottom: 0;
  width: 1px;
  background: #6a6a6a;
}

.ex-files {
  flex: 1;
  padding-left: 16px;
  font-size: 12px;
  letter-spacing: 0;
}

.ex-head {
  position: relative;
  height: 31px;
  padding: 6px 0 0 16px;
  color: #ccc;
}

.ex-sort {
  position: absolute;
  left: 130px;
  top: 1px;
  width: 8px;
  height: 5px;
  fill: none;
  stroke: #aaa;
}

.ex-file {
  height: 24px;
  display: flex;
  align-items: center;
  gap: 4px;
  padding-left: 3px;
  background: #4b4b4b;
  border: 1px solid #b5b5b5;
  color: #f0f0f0;
}

/* common window parts */
.titlebar {
  display: flex;
  align-items: center;
  background: #f3f3f3;
  color: #777;
}

.controls {
  margin-left: auto;
  display: flex;
  gap: 35px;
  padding-right: 18px;
}

.btn {
  font: inherit;
  letter-spacing: inherit;
  padding: 0;
  background: #fdfdfd;
  border: 1px solid #d0d0d0;
  border-bottom-color: #a8a8a8;
  border-radius: 3px;
  color: #1a1a1a;
}

.btn-off {
  background: #f5f5f5;
  border-color: #e4e4e4;
  color: #8f8f8f;
}

.link {
  color: #0067c0;
}

/* wizard */
.wizard {
  position: absolute;
  left: 1px;
  top: 21px;
  width: 761px;
  height: 559px;
  background: #fff;
  border: 1px solid #c4c4c4;
  display: flex;
  flex-direction: column;
}

.wiz-title {
  height: 30px;
  padding-left: 9px;
  gap: 6px;
}

.wiz-heading {
  height: 79px;
  padding: 25px 0 0 20px;
  font-family: Roboto, "Open Sans", sans-serif;
  font-size: 23px;
  line-height: 30px;
  font-weight: 300;
  letter-spacing: 0;
  color: #1d6f94;
}

.wiz-body {
  flex: 1;
  display: flex;
}

.wiz-steps {
  width: 194px;
  list-style: none;
  padding: 0 1px 0 20px;
  border-right: 1px solid #ddd;
  font-size: 12px;
  letter-spacing: 0;
  color: #555;
}

.wiz-steps li {
  height: 24px;
  line-height: 25px;
  padding-left: 18px;
}

.wiz-steps .current {
  background: #0072bc;
  color: #fff;
}

.wiz-steps .off {
  color: #c8c8c8;
}

.wiz-content {
  width: 545px;
  padding: 10px 0 0 20px;
}

.wiz-intro {
  width: 515px;
  line-height: 16px;
}

.wiz-line1 {
  margin-top: 11px;
  line-height: 16px;
}

.wiz-line2 {
  margin-top: 6px;
  line-height: 16px;
}

.wiz-table {
  width: 525px;
  height: 150px;
  margin-top: 5px;
  padding: 2px 3px 0;
  border: 1px solid #8c8c8c;
  border-radius: 2px;
  color: #23406e;
}

.wiz-row {
  height: 21px;
  display: grid;
  grid-template-columns: 59px 155px 129px 160px 16px;
  align-items: center;
  padding-bottom: 1px;
}

.wiz-row span {
  padding-left: 6px;
  white-space: nowrap;
  overflow: hidden;
}

.wiz-row.wiz-head {
  height: 20px;
  padding-bottom: 0;
  background: #fcfcfc;
  border-bottom: 1px solid #e2e2e2;
  color: #222;
}

.wiz-head span {
  height: 19px;
  line-height: 17px;
  padding-left: 5px;
  border-right: 1px solid #e2e2e2;
}

.wiz-marked {
  width: 198px;
  height: 30px;
  margin: 4px 0 0 -6px;
  border: 5px solid #ed1c24;
}

.wiz-custom {
  display: block;
  width: 100%;
  height: 100%;
  font: inherit;
  letter-spacing: inherit;
  padding: 0;
  background: #dcdcdc;
  border: 1px solid #707070;
  color: #1a1a1a;
}

.wiz-footer {
  height: 43px;
  background: #f0f0f0;
}

/* properties */
.props {
  position: absolute;
  left: 1453px;
  top: 49px;
  width: 444px;
  height: 541px;
  background: #f0f0f0;
  border: 1px solid #c8c8c8;
  display: flex;
  flex-direction: column;
}

.props-title {
  height: 29px;
  padding: 0 0 2px 8px;
  gap: 7px;
}

.props-close {
  margin-left: auto;
  margin-right: 10px;
}

.props-tabs {
  padding: 9px 0 0 7px;
  height: 47px;
  font-size: 10.2px;
  letter-spacing: 0;
}

.props-tabrow {
  display: flex;
  height: 18px;
}

.props-tabrow + .props-tabrow {
  height: 20px;
}

.ptab {
  display: block;
  text-align: center;
  background: #f0f0f0;
  border: 1px solid #dcdcdc;
  line-height: 18px;
}

.props-tabrow + .props-tabrow .ptab {
  line-height: 19px;
}

.w154 { width: 154px; }
.w148 { width: 148px; }
.w121 { width: 121px; padding-left: 4px; }
.w117 { width: 117px; }
.w151 { width: 151px; }

.props-tabrow .ptab-on {
  width: 159px;
  height: 23px;
  margin-top: -2px;
  line-height: 16px;
  background: #f9f9f9;
  border-bottom: 0;
}

.props-panel {
  width: 428px;
  height: 427px;
  margin-left: 6px;
  padding: 10px 0 0 14px;
  font-size: 10.3px;
  letter-spacing: 0;
  background: #f9f9f9;
  border: 1px solid #e4e4e4;
  border-top-color: #dcdcdc;
}

.props-label {
  margin-top: 15px;
}

.props-users {
  width: 401px;
  height: 111px;
  margin-top: 2px;
  padding: 1px;
  background: #fff;
  border: 1px solid #8c8c8c;
}

.user-row {
  height: 17px;
  display: flex;
  align-items: center;
  padding-left: 4px;
}

.user-row .ico-group {
  margin-right: 1px;
  width: 15px;
}

.user-row.is-on {
  background: #f0f0f0;
}

.props-edit {
  width: 398px;
  height: 22px;
  margin-top: 5px;
  display: flex;
  justify-content: space-between;
}

.btn-edit {
  width: 87px;
  height: 20px;
  margin-top: 2px;
  font-size: 11px;
}

.perm-head {
  width: 398px;
  margin-top: 14px;
  display: grid;
  grid-template-columns: 282px 63px 1fr;
}

.perm-head span:first-child {
  font-size: 10.8px;
}

.perm-box {
  width: 401px;
  height: 139px;
  margin-top: 1px;
  padding: 2px 0 0 11px;
  background: #fff;
  border: 1px solid #8c8c8c;
}

.perm-row {
  height: 18.300px;
  line-height: 18px;
  display: flex;
  align-items: center;
  justify-content: space-between;
  padding-right: 94px;
}

.perm-check {
  width: 14px;
  height: 12px;
  fill: none;
  stroke: #a0a0a0;
  stroke-width: 2;
}

.props-adv {
  width: 399px;
  margin-top: 8px;
  display: flex;
  justify-content: space-between;
  line-height: 15px;
}

.btn-adv {
  width: 89px;
  height: 21px;
  margin-top: 1px;
  font-size: 11px;
}

.props-footer {
  display: flex;
  justify-content: flex-end;
  gap: 9px;
  padding: 7px 8px 0 0;
  font-size: 10.3px;
  letter-spacing: 0;
}

.btn-foot {
  width: 72px;
  height: 20px;
}

/* advanced security dialogs */
.adv {
  position: absolute;
  width: 766px;
  background: #f0f0f0;
  border: 1px solid #bdbdbd;
  overflow: hidden;
}

.adv-left {
  left: -9px;
  top: 410px;
  height: 508px;
}

.adv-right {
  left: 795px;
  top: 399px;
  height: 519px;
}

.adv-left .link {
  margin-left: 8px;
}

.adv-title {
  height: 30px;
  padding: 0 0 2px 8px;
  gap: 6px;
}

.adv-right .titlebar-name {
  color: #333;
}

.adv-right .ctl {
  stroke: #222;
}

.adv-right .ctl-off {
  stroke: #ccc;
}

.adv-panel {
  width: 743px;
  height: 438px;
  margin: 11px 0 0 11px;
  padding: 8px 10px 0;
  background: #fff;
  border: 1px solid #b9b9b9;
}

.adv-meta {
  display: grid;
  grid-template-columns: 122px 1fr;
  grid-auto-rows: 29px;
  align-items: center;
  margin-bottom: 9px;
  letter-spacing: 0;
}

.adv-owner {
  display: flex;
  align-items: center;
  gap: 2px;
}

.shield {
  width: 14px;
  height: 16px;
  margin-left: 9px;
}

.text-caret {
  border-left: 1px solid #222;
}

.adv-tabs {
  display: flex;
  height: 22px;
  margin: 0 -10px;
  border-bottom: 1px solid #b0b0b0;
}

.atab {
  width: 88px;
  height: 21px;
  line-height: 20px;
  text-align: center;
  white-space: nowrap;
  background: #f0f0f0;
  border: 1px solid #d9d9d9;
  border-bottom: 0;
}

.atab-on {
  height: 22px;
  background: #fff;
}

.adv-info {
  width: 712px;
  margin-top: 16px;
}

.adv-label {
  margin-top: 11px;
}

.adv-list {
  width: 721px;
  height: 154px;
  margin-top: 6px;
  border: 1px solid #6e6e6e;
}

.adv-row {
  height: 19px;
  display: grid;
  grid-template-columns: 201px 50px 143px 144px 181px;
  align-items: center;
}

.adv-row span {
  padding-left: 6px;
  white-space: nowrap;
  overflow: hidden;
}

.adv-row span svg {
  display: inline-block;
  vertical-align: -3px;
  margin-right: 1px;
}

.adv-row > span:first-child {
  padding-left: 3px;
}

.adv-head {
  height: 25px;
}

.adv-head > span {
  height: 25px;
  line-height: 25px;
  border-right: 1px solid #e2e2e2;
}

.adv-head > span:first-child {
  padding-left: 6px;
}

.adv-btns {
  display: flex;
  gap: 9px;
  margin-top: 13px;
}

.btn-act {
  width: 71px;
  height: 21px;
}

.btn-inherit {
  display: block;
  width: 143px;
  height: 21px;
  margin-top: 13px;
}

.adv-replace {
  display: flex;
  align-items: center;
  gap: 3px;
  margin-top: 12px;
}

.checkbox {
  width: 13px;
  height: 13px;
  background: #fff;
  border: 1px solid #555;
  border-radius: 2px;
}

.adv-footer {
  display: flex;
  justify-content: flex-end;
  gap: 10px;
  padding: 9px 12px 0 0;
}

.btn-foot2 {
  width: 76px;
  height: 21px;
}

.btn-default {
  border: 1px solid #0067c0;
  box-shadow: inset 0 0 0 1px #0067c0;
}

/* taskbar */
.taskbar {
  position: relative;
  height: 47px;
  display: flex;
  align-items: center;
  padding-left: 749px;
  background: #1c1c1c;
  border-top: 1px solid #333;
  color: #fff;
  letter-spacing: 0;
}

.tb-start {
  width: 24px;
  height: 24px;
}

.tb-search {
  width: 220px;
  height: 32px;
  margin: 0 4px 0 12px;
  display: flex;
  align-items: center;
  gap: 10px;
  padding-left: 12px;
  background: #3a3a3a;
  border-radius: 16px;
  color: #c8c8c8;
  font-size: 13px;
}

.tb-lens {
  width: 15px;
  height: 15px;
  fill: none;
  stroke: #ccc;
  stroke-width: 1.300;
}

.tb-app {
  position: relative;
  width: 40px;
  height: 40px;
  margin-right: 4px;
  display: flex;
  align-items: center;
  justify-content: center;
  border-radius: 4px;
}

.tb-app.is-active {
  background: #2b2b2b;
}

.tb-icon {
  width: 24px;
  height: 24px;
}

.tb-ind {
  position: absolute;
  left: 12px;
  bottom: 1px;
  width: 16px;
  height: 3px;
  border-radius: 2px;
  background: #f06b70;
}

.tb-dot {
  position: absolute;
  left: 17px;
  bottom: 1px;
  width: 6px;
  height: 3px;
  border-radius: 2px;
  background: #9a9a9a;
}

.tb-tray {
  margin-left: auto;
  display: flex;
  align-items: center;
  padding-right: 19px;
}

.tray-chev {
  width: 12px;
  height: 7px;
  fill: none;
  stroke: #eee;
  stroke-width: 1.400;
}

.tray-app {
  width: 18px;
  height: 16px;
  margin-left: 20px;
}

.tray-net {
  width: 16px;
  height: 16px;
  margin-left: 14px;
  fill: none;
  stroke: #eee;
}

.tray-vol {
  width: 16px;
  height: 14px;
  margin-left: 7px;
  fill: none;
  stroke: #ddd;
}

.tray-clock {
  margin-left: 13px;
  display: flex;
  flex-direction: column;
  align-items: flex-end;
  font-size: 11.8px;
  line-height: 16px;
}
```
